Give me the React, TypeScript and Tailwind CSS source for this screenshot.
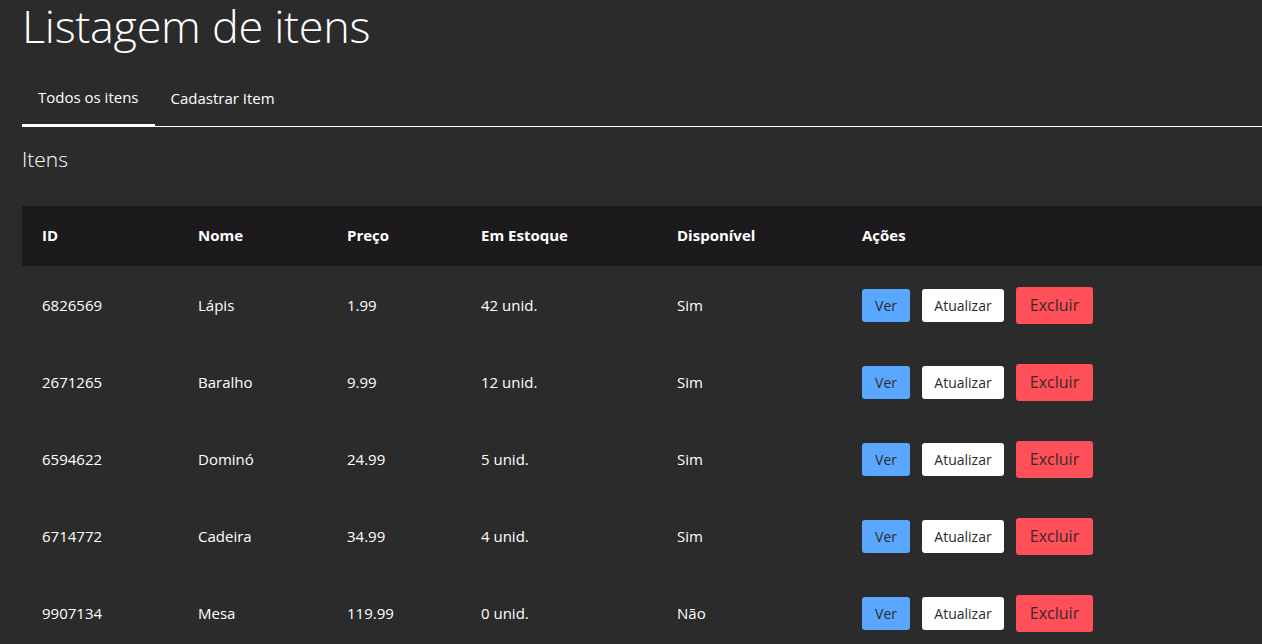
import { FC } from 'react';

type Item = {
  id: string;
  nome: string;
  preco: string;
  estoque: string;
  disponivel: string;
};

const itens: Item[] = [
  { id: '6826569', nome: 'Lápis', preco: '1.99', estoque: '42 unid.', disponivel: 'Sim' },
  { id: '2671265', nome: 'Baralho', preco: '9.99', estoque: '12 unid.', disponivel: 'Sim' },
  { id: '6594622', nome: 'Dominó', preco: '24.99', estoque: '5 unid.', disponivel: 'Sim' },
  { id: '6714772', nome: 'Cadeira', preco: '34.99', estoque: '4 unid.', disponivel: 'Sim' },
  { id: '9907134', nome: 'Mesa', preco: '119.99', estoque: '0 unid.', disponivel: 'Não' },
];

const App: FC = () => {
  return (
    <div className="min-h-screen bg-[#2b2b2b] pl-[22px] font-['Open_Sans',sans-serif] text-white">
      <h1 className="-mt-[4px] text-[45px] leading-[60px] font-light tracking-[-0.3px]">
        Listagem de itens
      </h1>

      <nav className="mt-[20px] flex border-b border-white">
        <button className="-mb-[1px] border-b-[3px] border-white px-4 pt-[10px] pb-[15px] text-[15px]">
          Todos os itens
        </button>
        <button className="px-4 pt-[10px] pb-[15px] text-[15px]">Cadastrar Item</button>
      </nav>

      <h2 className="mt-[17px] text-[21px] leading-[30px] font-light">Itens</h2>

      <table className="mt-[32px] w-full border-collapse text-left text-[15px]">
        <thead className="bg-[#1c1a1d]">
          <tr className="h-[60px]">
            <th className="w-[156px] pl-5 font-bold">ID</th>
            <th className="w-[149px] pl-5 font-bold">Nome</th>
            <th className="w-[134px] pl-5 font-bold">Preço</th>
            <th className="w-[196px] pl-5 font-bold">Em Estoque</th>
            <th className="w-[185px] pl-5 font-bold">Disponível</th>
            <th className="pl-5 font-bold">Ações</th>
          </tr>
        </thead>
        <tbody>
          {itens.map((item) => (
            <tr key={item.id} className="h-[77px]">
              <td className="pt-[3px] pl-5">{item.id}</td>
              <td className="pt-[3px] pl-5">{item.nome}</td>
              <td className="pt-[3px] pl-5">{item.preco}</td>
              <td className="pt-[3px] pl-5">{item.estoque}</td>
              <td className="pt-[3px] pl-5">{item.disponivel}</td>
              <td className="pt-[2px] pl-5">
                <div className="flex items-center gap-3">
                  <button className="h-[33px] w-[48px] rounded-[3px] bg-[#5aa7ff] text-[14px] text-[#2b2b2b]">
                    Ver
                  </button>
                  <button className="h-[33px] w-[82px] rounded-[3px] bg-white text-[14px] text-[#2b2b2b]">
                    Atualizar
                  </button>
                  <button className="h-[37px] w-[77px] rounded-[3px] bg-[#ff4f58] text-[16px] text-[#3a2a2b]">
                    Excluir
                  </button>
                </div>
              </td>
            </tr>
          ))}
        </tbody>
      </table>
    </div>
  );
};

export default App;
